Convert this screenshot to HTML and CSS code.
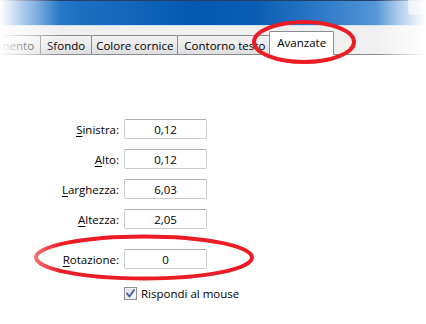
FILE: index.html
```html
<!DOCTYPE html>
<html lang="it">
<head>
  <meta charset="UTF-8" />
  <title>Avanzate</title>
  <link rel="stylesheet" href="styles.css">
</head>
<body>

  <div class="window">
    <div class="titlebar"><span class="corner-btn"></span></div>

    <div class="tabstrip">
      <div class="tab tab-cut">Posizionamento</div>
      <div class="tab">Sfondo</div>
      <div class="tab">Colore cornice</div>
      <div class="tab">Contorno testo</div>
      <div class="tab active">Avanzate</div>
    </div>

    <div class="panel">
      <div class="form">
        <label class="lbl"><u>S</u>inistra:</label>
        <div class="field">0,12</div>

        <label class="lbl"><u>A</u>lto:</label>
        <div class="field">0,12</div>

        <label class="lbl"><u>L</u>arghezza:</label>
        <div class="field">6,03</div>

        <label class="lbl"><u>A</u>ltezza:</label>
        <div class="field">2,05</div>

        <label class="lbl spaced"><u>R</u>otazione:</label>
        <div class="field spaced">0</div>

        <div class="check-row">
          <span class="checkbox">
            <svg width="9" height="9" viewBox="0 0 9 9">
              <path d="M1 4.5 L3.5 7.5 L8 1" fill="none" stroke="#3c5ca8" stroke-width="1.8" stroke-linecap="round" stroke-linejoin="round"/>
            </svg>
          </span>
          <span>Rispondi al mouse</span>
        </div>
      </div>
    </div>

    <!-- red marks drawn on top of the screenshot -->
    <svg class="marks" width="426" height="324" viewBox="0 0 426 324">
      <ellipse cx="304" cy="42" rx="50" ry="20" fill="none" stroke="#ec1c24" stroke-width="4"/>
      <ellipse cx="144" cy="257.5" rx="108" ry="21" fill="none" stroke="#ec1c24" stroke-width="4"/>
    </svg>

    <div class="fade fade-left"></div>
    <div class="fade fade-right"></div>
  </div>

</body>
</html>
```

FILE: styles.css
```css
* {
  box-sizing: border-box;
}

body {
  margin: 0;
  background: #fff;
  font-family: 'Open Sans', 'Noto Sans', sans-serif;
  font-size: 11.5px;
  color: #000;
}

.window {
  position: relative;
  width: 426px;
  height: 324px;
  overflow: hidden;
  background: #fff;
}

.titlebar {
  position: relative;
  height: 26px;
  border-top: 1px solid #23406a;
  border-bottom: 1px solid #cfe0f2;
  background: linear-gradient(90deg, #4b93d8 0%, #1f70c2 18%, #0657b1 45%, #0a5cb4 60%, #3a83cc 80%, #7eb2e2 100%);
}

.corner-btn {
  position: absolute;
  right: 2px;
  top: -4px;
  width: 16px;
  height: 18px;
  border: 1px solid #f1e9df;
  border-radius: 3px;
  background: #fdfaf6;
  opacity: 0.6;
}

.tabstrip {
  display: flex;
  align-items: flex-end;
  height: 29px;
  padding-top: 9px;
  margin-left: -59px;
  background: #f0f0f0;
  border-bottom: 1px solid #898c95;
}

.tab {
  height: 19px;
  padding: 0 6px;
  margin-right: -1px;
  display: flex;
  align-items: center;
  white-space: nowrap;
  border: 1px solid #898c95;
  border-bottom: none;
  background: linear-gradient(#f2f2f2, #ebebeb 50%, #dddddd);
  border-radius: 2px 2px 0 0;
}

.tab:nth-child(3) {
  padding: 0 4px;
}

.tab.active {
  position: relative;
  height: 24px;
  margin: 0 0 -1px -2px;
  padding: 0 7px 3px;
  background: #fff;
  z-index: 1;
}

.panel {
  padding-top: 64px;
}

.form {
  display: grid;
  grid-template-columns: 120px 83px;
  column-gap: 4px;
  row-gap: 10px;
  align-items: center;
}

.lbl {
  text-align: right;
  padding-right: 1px;
}

.lbl u {
  text-underline-offset: 2px;
}

.field {
  height: 20px;
  display: flex;
  align-items: center;
  justify-content: center;
  border: 1px solid #c9cbd0;
  border-top-color: #abadb3;
  border-radius: 2px;
}

.spaced {
  margin-top: 10px;
}

.check-row {
  grid-column: 2;
  display: flex;
  align-items: center;
  gap: 4px;
  margin-top: 7px;
  white-space: nowrap;
}

.checkbox {
  flex: none;
  width: 13px;
  height: 13px;
  display: flex;
  align-items: center;
  justify-content: center;
  border: 1px solid #8e8f8f;
  background: linear-gradient(135deg, #dcdcdc, #f8f8f8);
  box-shadow: inset 0 0 0 1px #f4f4f4;
}

.marks {
  position: absolute;
  left: 0;
  top: 0;
  z-index: 2;
}

.fade {
  position: absolute;
  top: 0;
  bottom: 0;
  z-index: 3;
}

.fade-left {
  left: 0;
  width: 60px;
  background: linear-gradient(90deg, #fff 0%, rgba(255, 255, 255, 0.6) 35%, rgba(255, 255, 255, 0) 100%);
}

.fade-right {
  right: 0;
  width: 50px;
  background: linear-gradient(270deg, #fff 0%, rgba(255, 255, 255, 0.7) 30%, rgba(255, 255, 255, 0) 100%);
}
```
